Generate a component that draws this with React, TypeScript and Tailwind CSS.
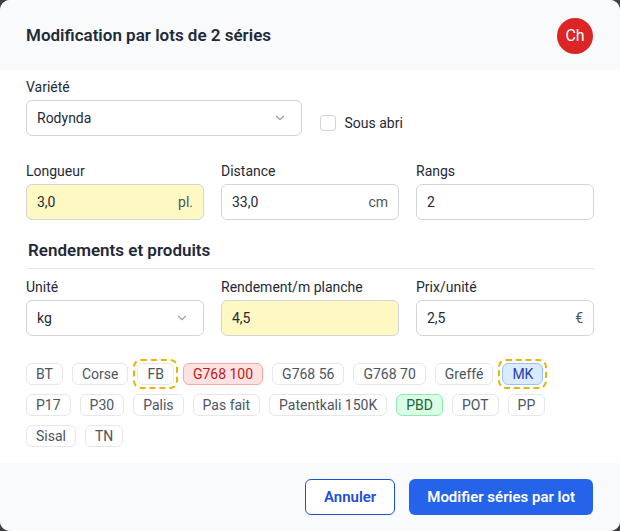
import { ChevronDown } from "lucide-react";

const tags = [
  { label: "BT" },
  { label: "Corse" },
  { label: "FB", outline: true },
  { label: "G768 100", tone: "red" },
  { label: "G768 56" },
  { label: "G768 70" },
  { label: "Greffé" },
  { label: "MK", tone: "blue", outline: true },
  { label: "P17" },
  { label: "P30" },
  { label: "Palis" },
  { label: "Pas fait" },
  { label: "Patentkali 150K" },
  { label: "PBD", tone: "green" },
  { label: "POT" },
  { label: "PP" },
  { label: "Sisal" },
  { label: "TN" },
];

const toneClass: Record<string, string> = {
  red: "bg-[#fee2e2] border-[#fca5a5] text-[#b91c1c]",
  blue: "bg-[#dbeafe] border-[#93c5fd] text-[#1e40af]",
  green: "bg-[#dcfce7] border-[#86efac] text-[#166534]",
  none: "bg-white border-[#e5e7eb] text-[#4b5563]",
};

interface FieldProps {
  label: string;
  value: string;
  suffix?: string;
  highlight?: boolean;
  select?: boolean;
}

const Field = ({ label, value, suffix, highlight, select }: FieldProps) => {
  return (
    <div className="flex flex-col">
      <label className="text-sm leading-5 text-[#1f2937] mb-[3px]">{label}</label>
      <div
        className={`h-9 rounded-md border border-[#d1d5db] flex items-center justify-between px-[10px] text-sm ${
          highlight ? "bg-[#fef9c3]" : "bg-white"
        }`}
      >
        <span className="text-[#1f2937]">{value}</span>
        {suffix && <span className="text-[#4b5563]">{suffix}</span>}
        {select && <ChevronDown className="w-3.5 h-3.5 text-[#9ca3af] mr-1" strokeWidth={2} />}
      </div>
    </div>
  );
};

const Tag = ({ label, tone, outline }: { label: string; tone?: string; outline?: boolean }) => {
  const pill = (
    <span
      className={`inline-flex items-center h-[22px] px-[9px] rounded-md border text-sm leading-none ${
        toneClass[tone ?? "none"]
      }`}
    >
      {label}
    </span>
  );
  if (!outline) return pill;
  return (
    <span className="inline-flex -m-[4px] p-[2px] rounded-lg border-2 border-dashed border-[#eab308]">
      {pill}
    </span>
  );
};

export default function App() {
  return (
    <div
      className="w-[620px] h-[531px] bg-[#3f3f46] overflow-hidden"
      style={{ fontFamily: "Roboto, 'Noto Sans', sans-serif" }}
    >
      <div className="h-full bg-white rounded-[10px] overflow-hidden flex flex-col">
        {/* Header */}
        <div className="h-[70px] shrink-0 bg-[#f8fafc] flex items-center justify-between pl-[26px] pr-[27px] pt-[2px]">
          <h2 className="text-[17px] font-semibold text-[#1f2937]">Modification par lots de 2 séries</h2>
          <div className="w-9 h-9 rounded-full bg-[#dc2626] text-white flex items-center justify-center text-base">
            Ch
          </div>
        </div>

        {/* Body */}
        <div className="flex-1 px-[26px] pt-[7px]">
          <div className="grid grid-cols-2 gap-[17px]">
            <Field label="Variété" value="Rodynda" select />
            <div className="flex items-end pb-[2px] pl-px">
              <label className="flex items-center gap-[9px] h-[20px] mb-[1px]">
                <span className="w-4 h-4 rounded-[3px] border border-[#d1d5db] bg-white" />
                <span className="text-sm text-[#1f2937]">Sous abri</span>
              </label>
            </div>
          </div>

          <div className="grid grid-cols-3 gap-[17px] mt-[25px]">
            <Field label="Longueur" value="3,0" suffix="pl." highlight />
            <Field label="Distance" value="33,0" suffix="cm" />
            <Field label="Rangs" value="2" />
          </div>

          <h3 className="mt-[18px] pl-[2px] pb-[6px] border-b border-[#e5e7eb] text-[17px] leading-6 font-semibold text-[#1f2937]">
            Rendements et produits
          </h3>

          <div className="grid grid-cols-3 gap-[17px] mt-[8px]">
            <Field label="Unité" value="kg" select />
            <Field label="Rendement/m planche" value="4,5" highlight />
            <Field label="Prix/unité" value="2,5" suffix="€" />
          </div>

          <div className="flex flex-wrap gap-x-[9px] gap-y-[9px] mt-[27px]">
            {tags.map((t) => (
              <Tag key={t.label} label={t.label} tone={t.tone} outline={t.outline} />
            ))}
          </div>
        </div>

        {/* Footer */}
        <div className="h-[68px] shrink-0 bg-[#f8fafc] flex items-center justify-end gap-[14px] px-[27px]">
          <button className="h-9 px-[18px] rounded-md border border-[#1d4ed8] bg-white text-[15px] font-semibold text-[#1d4ed8]">
            Annuler
          </button>
          <button className="h-9 px-[18px] rounded-md bg-[#2563eb] text-[15px] font-semibold text-white">
            Modifier séries par lot
          </button>
        </div>
      </div>
    </div>
  );
}
